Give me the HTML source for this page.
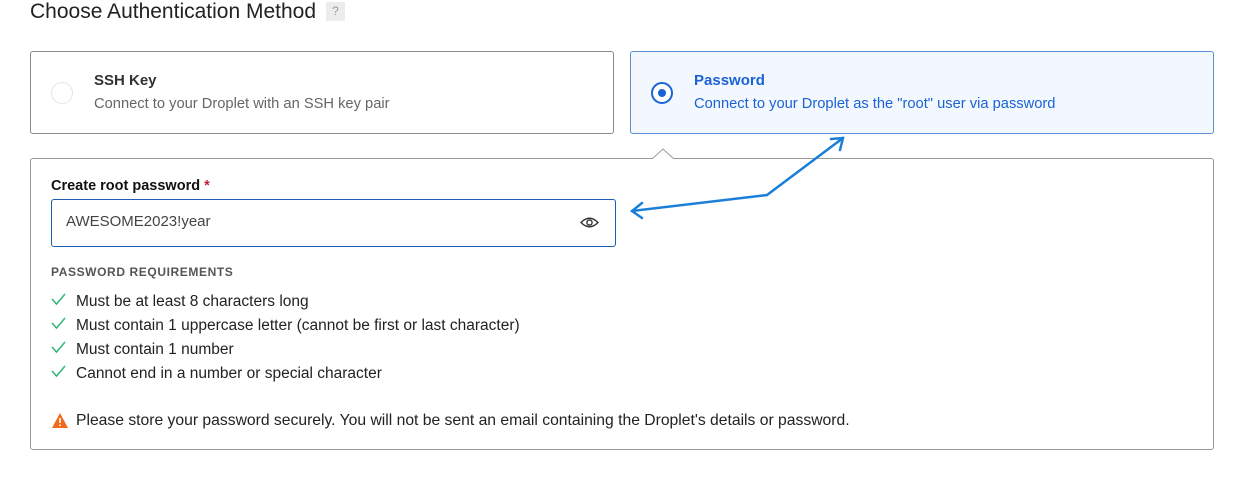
<!DOCTYPE html>
<html><head><meta charset="utf-8"><style>
*{margin:0;padding:0;box-sizing:border-box}
body{width:1234px;height:488px;background:#fff;font-family:"Liberation Sans",sans-serif;position:relative;overflow:hidden;color:#222}
.a{position:absolute;white-space:nowrap}
.card{position:absolute;top:51px;width:584px;height:83px;border:1px solid #8a8a8a;border-radius:3px}
</style></head><body>
<div class="a" style="left:30px;top:0px;font-size:21px;line-height:24px;color:#222">Choose Authentication Method</div>
<div class="a" style="left:326px;top:2px;width:19px;height:19px;background:#ececec;color:#999;font-size:12px;text-align:center;line-height:19px">?</div>

<div class="card" style="left:30px;background:#fff"></div>
<div class="a" style="left:51px;top:82px;width:22px;height:22px;border:1px solid #e4e4e4;border-radius:50%"></div>
<div class="a" style="left:94px;top:72px;font-size:15px;font-weight:bold;color:#333">SSH Key</div>
<div class="a" style="left:94px;top:96px;font-size:14.7px;color:#666">Connect to your Droplet with an SSH key pair</div>

<div class="card" style="left:630px;background:#f3f7fe;border-color:#5a8fd6"></div>
<div class="a" style="left:651px;top:82px;width:22px;height:22px;border:2px solid #1a63d6;border-radius:50%;background:#fff"></div>
<div class="a" style="left:658px;top:89px;width:8px;height:8px;border-radius:50%;background:#1a63d6"></div>
<div class="a" style="left:694px;top:72px;font-size:15px;font-weight:bold;color:#1a63d6">Password</div>
<div class="a" style="left:694px;top:96px;font-size:14.7px;color:#1a63d6">Connect to your Droplet as the "root" user via password</div>

<div class="a" style="left:30px;top:158px;width:1184px;height:292px;border:1px solid #999;border-radius:3px"></div>
<svg class="a" style="left:652px;top:148px" width="24" height="12"><path d="M0 11 L11 1 L22 11" fill="#fff" stroke="#999" stroke-width="1"/></svg>

<div class="a" style="left:51px;top:178px;font-size:14.5px;font-weight:bold;color:#111">Create root password <span style="color:#c02040">*</span></div>
<div class="a" style="left:51px;top:199px;width:565px;height:48px;border:1px solid #1a5fb4;border-radius:3px"></div>
<div class="a" style="left:66px;top:213px;font-size:15px;color:#444">AWESOME2023!year</div>
<svg class="a" style="left:580px;top:216px" width="19" height="13" viewBox="0 0 19 13"><path d="M1 6.5 Q9.5 -2 18 6.5 Q9.5 15 1 6.5Z" fill="none" stroke="#333" stroke-width="1.4"/><circle cx="9.5" cy="6.5" r="2.6" fill="none" stroke="#333" stroke-width="1.4"/></svg>

<div class="a" style="left:51px;top:265px;font-size:12px;font-weight:bold;color:#555;letter-spacing:0.6px">PASSWORD REQUIREMENTS</div>
<svg class="a" style="left:51px;top:292px" width="16" height="90"><g fill="none" stroke="#3cb87a" stroke-width="1.6"><path d="M1 7 L5.5 12 L14 2"/><path d="M1 31 L5.5 36 L14 26"/><path d="M1 55 L5.5 60 L14 50"/><path d="M1 79 L5.5 84 L14 74"/></g></svg>
<div class="a" style="left:76px;top:290px;font-size:15.5px;line-height:24px;color:#222">Must be at least 8 characters long<br>Must contain 1 uppercase letter (cannot be first or last character)<br>Must contain 1 number<br>Cannot end in a number or special character</div>

<svg class="a" style="left:51px;top:412px" width="18" height="17"><path d="M9 1 L17 16 L1 16Z" fill="#f06a1a"/><rect x="8.2" y="6" width="1.6" height="5" fill="#fff"/><rect x="8.2" y="12.5" width="1.6" height="1.6" fill="#fff"/></svg>
<div class="a" style="left:76px;top:412px;font-size:15.7px;color:#222">Please store your password securely. You will not be sent an email containing the Droplet's details or password.</div>

<svg class="a" style="left:0;top:0" width="1234" height="488"><g fill="none" stroke="#1a7fd8" stroke-width="2.5" stroke-linecap="round"><path d="M632 211 L767 195 L843 138"/><path d="M642 203 L632 211 L642 218"/><path d="M831 139 L843 138 L840 150"/></g></svg>
</body></html>
